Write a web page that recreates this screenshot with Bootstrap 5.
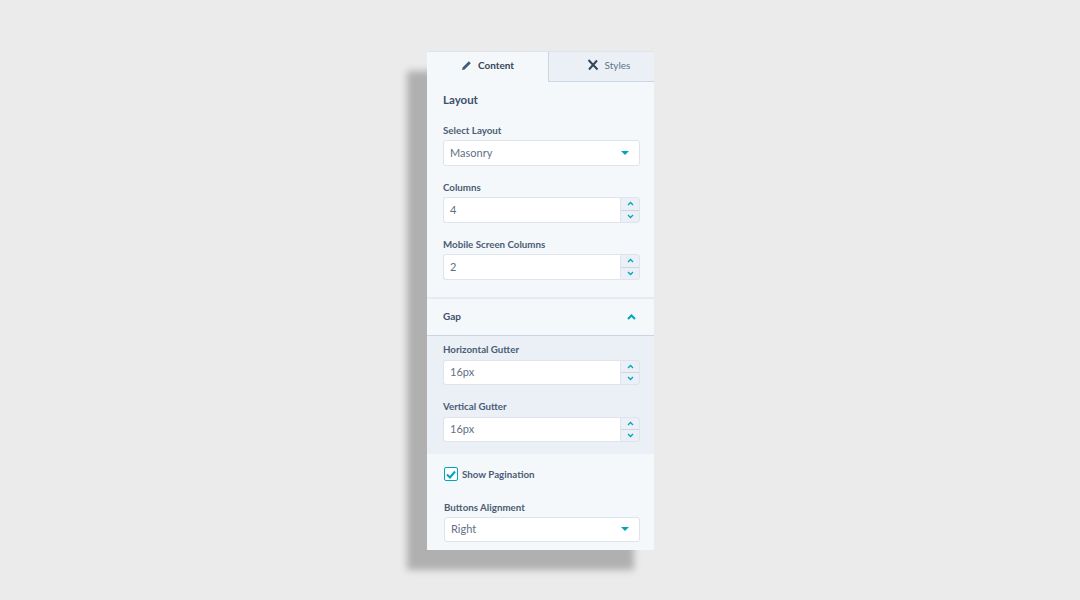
<!DOCTYPE html>
<html lang="en">
<head>
<meta charset="UTF-8">
<title>Module settings</title>
<link href="https://cdn.jsdelivr.net/npm/bootstrap@5.3.3/dist/css/bootstrap.min.css" rel="stylesheet">
<style>
  body { background: #ebebeb; font-family: "Lato", "Liberation Sans", sans-serif; color: #33475b; height: 600px; overflow: hidden; padding: 51px 0 0 427px; }
  .panel-box { width: 227px; height: 499px; background: #f5f8fa; box-shadow: -20px 20px 7px rgba(0,0,0,.25); overflow: hidden; }
  .tab-item { height: 31px; font-size: 10px; font-weight: 700; border-top: 1px solid #dfe3eb; gap: 6px; padding-bottom: 3px; }
  .tab-on { width: 121px; }
  .tab-off { flex: 1; background: #eaf0f6; border-left: 1px solid #cbd6e2; border-bottom: 1px solid #cbd6e2; font-weight: 400; color: #5f7489; padding-left: 14px; }
  .pad-box { padding: 0 14px 0 16px; }
  .sec-title { font-size: 11.5px; font-weight: 700; line-height: 14px; margin: 11px 0 17px; color: #3d5068; }
  .fld-label { font-size: 9.75px; font-weight: 700; line-height: 12px; margin-bottom: 4px; display: block; color: #4a5d75; }
  .fld-row { margin-bottom: 15px; }
  .fake-select, .fake-input { height: 26px; background: #fff; border: 1px solid #dfe3eb; border-radius: 3px; font-size: 11px; padding-left: 6px; color: #5f6f85; }
  .num-wrap { height: 26px; }
  .num-wrap .fake-input { flex: 1; border-radius: 3px 0 0 3px; border-right: 0; height: auto; }
  .step-box { width: 20px; background: #eaf0f6; border: 1px solid #dfe3eb; border-radius: 0 3px 3px 0; }
  .step-btn { flex: 1; border-bottom: 1px solid #cbd6e2; }
  .step-btn:last-child { border-bottom: 0; }
  .caret-down { width: 0; height: 0; border-left: 4px solid transparent; border-right: 4px solid transparent; border-top: 4px solid #00a4bd; margin-right: 10px; }
  .gap-head { height: 39px; border-top: 2px solid #e6ebf1; border-bottom: 1px solid #cbd6e2; margin-top: 17px; padding-bottom: 1px; font-size: 10px; font-weight: 700; color: #3d5068; }
  .gap-body { background: #eaf0f6; padding-top: 6.5px; height: 118px; }
  .gap-body .num-wrap { height: 25px; }
  .gap-body .fld-label { margin-bottom: 5px; }
  .gap-body .fld-row { margin-bottom: 15px; }
  .chk-row { padding-top: 13px; margin-bottom: 19px; gap: 4px; }
  .chk-box { width: 14px; height: 14px; border: 1px solid #00a4bd; border-radius: 2px; background: #fff; margin-left: 1px; }
  .chk-label { font-size: 9.75px; font-weight: 700; color: #4a5d75; }
  .last-sel { margin-left: 1px; }
  .last-box { height: 25px; }
</style>
</head>
<body>
<div class="panel-box">
  <div class="d-flex">
    <div class="tab-item tab-on d-flex align-items-center justify-content-center">
      <svg width="11" height="11" viewBox="0 0 11 11"><path d="M1 10l.6-2.6L7.8 1.2l2 2L3.6 9.4z" fill="#425b76"/></svg>
      <span>Content</span>
    </div>
    <div class="tab-item tab-off d-flex align-items-center justify-content-center">
      <svg width="12" height="12" viewBox="0 0 12 12"><path d="M1.5 1L10.5 10.5M10 1.5L2 10.5" stroke="#33475b" stroke-width="2"/></svg>
      <span>Styles</span>
    </div>
  </div>

  <div class="pad-box">
    <div class="sec-title">Layout</div>
    <div class="fld-row">
      <label class="fld-label">Select Layout</label>
      <div class="fake-select d-flex align-items-center justify-content-between">Masonry<span class="caret-down"></span></div>
    </div>
    <div class="fld-row">
      <label class="fld-label">Columns</label>
      <div class="num-wrap d-flex">
        <div class="fake-input d-flex align-items-center">4</div>
        <div class="step-box d-flex flex-column">
          <div class="step-btn d-flex align-items-center justify-content-center"><svg width="7" height="5" viewBox="0 0 7 5"><path d="M1 4l2.5-2.5L6 4" fill="none" stroke="#00a4bd" stroke-width="1.3"/></svg></div>
          <div class="step-btn d-flex align-items-center justify-content-center"><svg width="7" height="5" viewBox="0 0 7 5"><path d="M1 1l2.5 2.5L6 1" fill="none" stroke="#00a4bd" stroke-width="1.3"/></svg></div>
        </div>
      </div>
    </div>
    <div class="fld-row mb-0">
      <label class="fld-label">Mobile Screen Columns</label>
      <div class="num-wrap d-flex">
        <div class="fake-input d-flex align-items-center">2</div>
        <div class="step-box d-flex flex-column">
          <div class="step-btn d-flex align-items-center justify-content-center"><svg width="7" height="5" viewBox="0 0 7 5"><path d="M1 4l2.5-2.5L6 4" fill="none" stroke="#00a4bd" stroke-width="1.3"/></svg></div>
          <div class="step-btn d-flex align-items-center justify-content-center"><svg width="7" height="5" viewBox="0 0 7 5"><path d="M1 1l2.5 2.5L6 1" fill="none" stroke="#00a4bd" stroke-width="1.3"/></svg></div>
        </div>
      </div>
    </div>
  </div>

  <div class="gap-head pad-box d-flex align-items-center justify-content-between">
    <span>Gap</span>
    <svg class="me-1" width="9" height="6" viewBox="0 0 9 6"><path d="M1 5l3.5-3.5L8 5" fill="none" stroke="#00a4bd" stroke-width="2"/></svg>
  </div>

  <div class="gap-body pad-box">
    <div class="fld-row">
      <label class="fld-label">Horizontal Gutter</label>
      <div class="num-wrap d-flex">
        <div class="fake-input d-flex align-items-center">16px</div>
        <div class="step-box d-flex flex-column">
          <div class="step-btn d-flex align-items-center justify-content-center"><svg width="7" height="5" viewBox="0 0 7 5"><path d="M1 4l2.5-2.5L6 4" fill="none" stroke="#00a4bd" stroke-width="1.3"/></svg></div>
          <div class="step-btn d-flex align-items-center justify-content-center"><svg width="7" height="5" viewBox="0 0 7 5"><path d="M1 1l2.5 2.5L6 1" fill="none" stroke="#00a4bd" stroke-width="1.3"/></svg></div>
        </div>
      </div>
    </div>
    <div class="fld-row mb-0">
      <label class="fld-label">Vertical Gutter</label>
      <div class="num-wrap d-flex">
        <div class="fake-input d-flex align-items-center">16px</div>
        <div class="step-box d-flex flex-column">
          <div class="step-btn d-flex align-items-center justify-content-center"><svg width="7" height="5" viewBox="0 0 7 5"><path d="M1 4l2.5-2.5L6 4" fill="none" stroke="#00a4bd" stroke-width="1.3"/></svg></div>
          <div class="step-btn d-flex align-items-center justify-content-center"><svg width="7" height="5" viewBox="0 0 7 5"><path d="M1 1l2.5 2.5L6 1" fill="none" stroke="#00a4bd" stroke-width="1.3"/></svg></div>
        </div>
      </div>
    </div>
  </div>

  <div class="pad-box">
    <div class="chk-row d-flex align-items-center">
      <div class="chk-box d-flex align-items-center justify-content-center"><svg width="10" height="9" viewBox="0 0 10 9"><path d="M1 4.5l3 3 5-6" fill="none" stroke="#00a4bd" stroke-width="2"/></svg></div>
      <span class="chk-label">Show Pagination</span>
    </div>
    <label class="fld-label last-sel">Buttons Alignment</label>
    <div class="fake-select last-sel last-box d-flex align-items-center justify-content-between">Right<span class="caret-down"></span></div>
  </div>
</div>
<script src="https://cdn.jsdelivr.net/npm/bootstrap@5.3.3/dist/js/bootstrap.bundle.min.js"></script>
</body>
</html>
